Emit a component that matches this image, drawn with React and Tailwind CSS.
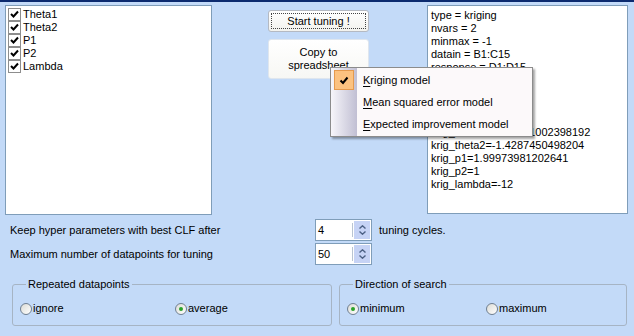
import { useState } from 'react'

const params = ['Theta1', 'Theta2', 'P1', 'P2', 'Lambda']

// lines 6-9 sit under the popup menu in the reference, so they stay blank
const settings = [
  'type = kriging',
  'nvars = 2',
  'minmax = -1',
  'datain = B1:C15',
  'response = D1:D15',
  '',
  '',
  '',
  '',
  'krig_theta1=-1.89741002398192',
  'krig_theta2=-1.4287450498204',
  'krig_p1=1.99973981202641',
  'krig_p2=1',
  'krig_lambda=-12',
]

function CheckBox() {
  return (
    <span className="w-[13px] h-[13px] border border-[#8d8d8d] bg-white flex items-center justify-center shrink-0">
      <svg width="9" height="9" viewBox="0 0 9 9">
        <path d="M1 4 L3.5 6.5 L8 1.5" stroke="#000" strokeWidth="2" fill="none" />
      </svg>
    </span>
  )
}

function Radio({ checked, label, className = '' }) {
  return (
    <div className={`flex items-center ${className}`}>
      <span className="w-[12px] h-[12px] rounded-full border border-[#6f7f91] bg-gradient-to-br from-[#dcdcd6] to-white flex items-center justify-center shrink-0">
        {checked && <span className="w-[4px] h-[4px] rounded-full bg-[#2aa22a]" />}
      </span>
      <span className="ml-[1px]">{label}</span>
    </div>
  )
}

function SpinBox({ value }) {
  return (
    <div className="w-[57px] h-[22px] border border-[#7f9db9] bg-white flex items-stretch">
      <span className="flex-1 pl-[2px] flex items-center">{value}</span>
      <span className="w-px my-[3px] bg-[#b9c4d2]" />
      <span className="w-[16px] my-[1px] mr-[1px] ml-[1px] bg-[#c6d3f5] flex flex-col items-center justify-center gap-[2px]">
        <svg width="7" height="4" viewBox="0 0 7 4">
          <path d="M0.5 3.5 L3.5 0.8 L6.5 3.5" stroke="#4d6185" strokeWidth="1.4" fill="none" />
        </svg>
        <svg width="7" height="4" viewBox="0 0 7 4">
          <path d="M0.5 0.5 L3.5 3.2 L6.5 0.5" stroke="#4d6185" strokeWidth="1.4" fill="none" />
        </svg>
      </span>
    </div>
  )
}

function MenuItem({ hot, rest, checked }) {
  return (
    <div className="h-[22px] flex items-center">
      <div className="w-[26px] h-full flex items-center justify-center">
        {checked && (
          <span className="w-[20px] h-[20px] bg-[#fcc280] border border-[#e59a4e] flex items-center justify-center">
            <svg width="10" height="9" viewBox="0 0 10 9">
              <path d="M1.5 4.5 L4 7 L8.5 1.5" stroke="#000" strokeWidth="2" fill="none" />
            </svg>
          </span>
        )}
      </div>
      <span className="ml-[6px]">
        <span className="underline underline-offset-2">{hot}</span>
        {rest}
      </span>
    </div>
  )
}

export default function App() {
  const [open] = useState(true)

  return (
    <div className="w-[634px] h-[336px] relative overflow-hidden bg-[#c3daf8] border-t-2 border-[#0c2a6f] text-[11px] leading-[13px] text-black font-['Liberation_Sans',sans-serif]">
      <div className="flex pt-[3px] pl-[5px]">
        <div className="w-[207px] h-[210px] border border-[#7f9db9] bg-white pt-[2px] pl-[2px]">
          {params.map((p) => (
            <div key={p} className="h-[13px] flex items-center">
              <CheckBox />
              <span className="ml-[2px]">{p}</span>
            </div>
          ))}
        </div>

        <div className="ml-[56px] w-[101px] flex flex-col">
          <button className="mt-[5px] h-[22px] rounded-[3px] border border-[#b4b9c2] bg-gradient-to-b from-white to-[#f2f2ee] p-[2px] flex">
            <span className="flex-1 border border-dotted border-[#444] flex items-center justify-center">Start tuning !</span>
          </button>
          <button className="mt-[7px] h-[40px] rounded-[3px] border border-[#dfe6ee] bg-gradient-to-b from-white to-[#f7f7f4] flex flex-col items-center justify-center">
            <span>Copy to</span>
            <span>spreadsheet</span>
          </button>
        </div>

        <div className="ml-[58px] w-[201px] h-[209px] border border-[#7f9db9] bg-white pt-[3px] pl-[3px] whitespace-pre">
          {settings.map((s, i) => (
            <div key={i} className="h-[13px]">{s}</div>
          ))}
        </div>
      </div>

      <div className="mt-[4px] pl-[10px] flex items-center h-[22px]">
        <span className="w-[305px]">Keep hyper parameters with best CLF after</span>
        <SpinBox value="4" />
        <span className="ml-[7px]">tuning cycles.</span>
      </div>
      <div className="mt-[2px] pl-[10px] flex items-center h-[22px]">
        <span className="w-[305px]">Maximum number of datapoints for tuning</span>
        <SpinBox value="50" />
      </div>

      <div className="mt-[13px] flex">
        <fieldset className="ml-[12px] w-[320px] h-[48px] border border-[#a6b4c4] rounded-[3px] pl-[7px]">
          <legend className="ml-[6px] px-[2px]">Repeated datapoints</legend>
          <div className="flex mt-[11px]">
            <Radio label="ignore" className="w-[155px]" />
            <Radio label="average" checked />
          </div>
        </fieldset>
        <fieldset className="ml-[7px] w-[288px] h-[48px] border border-[#a6b4c4] rounded-[3px] pl-[7px]">
          <legend className="ml-[6px] px-[2px]">Direction of search</legend>
          <div className="flex mt-[11px]">
            <Radio label="minimum" checked className="w-[139px]" />
            <Radio label="maximum" />
          </div>
        </fieldset>
      </div>

      {open && (
        <div className="absolute left-[330px] top-[65px] w-[203px] h-[70px] border border-[#8c8c8c] bg-[#fcf9fa] shadow-[2px_2px_2px_rgba(0,0,0,0.35)] py-[1px]">
          <div className="absolute left-0 top-0 bottom-0 w-[26px] bg-gradient-to-r from-[#f7f6fa] to-[#c1bfd3]" />
          <div className="relative">
            <MenuItem hot="K" rest="riging model" checked />
            <MenuItem hot="M" rest="ean squared error model" />
            <MenuItem hot="E" rest="xpected improvement model" />
          </div>
        </div>
      )}
    </div>
  )
}
